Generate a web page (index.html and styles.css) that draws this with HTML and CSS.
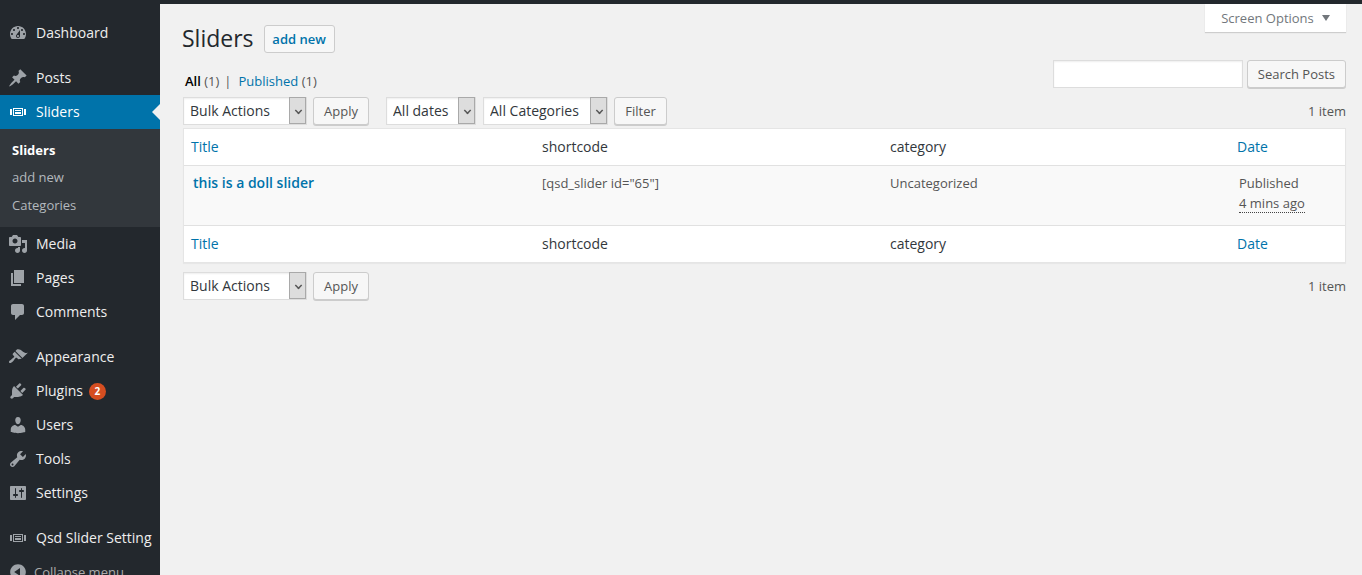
FILE: index.html
```html
<!DOCTYPE html>
<html lang="en">
<head>
<meta charset="utf-8">
<title>Sliders</title>
<link rel="stylesheet" href="styles.css">
</head>
<body>
<div class="topbar"></div>
<div class="layout">
  <nav class="sidebar">
    <ul class="menu">
      <li class="item sep"><svg class="ico" viewBox="0 0 20 20"><path d="M3.76 16h12.48c1.1-1.37 1.76-3.11 1.76-5 0-4.42-3.58-8-8-8s-8 3.58-8 8c0 1.89.66 3.63 1.76 5zM10 4c.55 0 1 .45 1 1s-.45 1-1 1-1-.45-1-1 .45-1 1-1zM6 6c.55 0 1 .45 1 1s-.45 1-1 1-1-.45-1-1 .45-1 1-1zm8 0c.55 0 1 .45 1 1s-.45 1-1 1-1-.45-1-1 .45-1 1-1zm-5.37 5.55L12 7v6c0 1.1-.9 2-2 2s-2-.9-2-2c0-.57.24-1.08.63-1.45zM4 10c.55 0 1 .45 1 1s-.45 1-1 1-1-.45-1-1 .45-1 1-1zm12 0c.55 0 1 .45 1 1s-.45 1-1 1-1-.45-1-1 .45-1 1-1zm-5 3c0-.55-.45-1-1-1s-1 .45-1 1 .45 1 1 1 1-.45 1-1z" fill-rule="evenodd"/></svg><span class="label">Dashboard</span></li>
      <li class="item"><svg class="ico" viewBox="0 0 20 20"><path d="M10.44 3.02l1.82-1.82 6.36 6.35-1.83 1.82c-1.05-.68-2.48-.57-3.41.36l-.75.75c-.92.93-1.04 2.35-.35 3.41l-1.83 1.82-2.41-2.41-2.8 2.79c-.42.42-3.38 2.71-3.8 2.29s1.86-3.39 2.28-3.81l2.79-2.79L4.1 9.36l1.83-1.82c1.05.69 2.48.57 3.4-.36l.75-.75c.93-.92 1.05-2.35.36-3.41z"/></svg><span class="label">Posts</span></li>
      <li class="item active"><svg class="ico" viewBox="0 0 20 20"><path d="M5 14V6h10v8H5zm-3-1V7h2v6H2zm4-6v6h8V7H6zm10 0h2v6h-2V7zm-3 2V8H7v1h6zm0 3v-2H7v2h6z" fill-rule="evenodd"/></svg><span class="label">Sliders</span></li>
      <li class="submenu">
        <a class="sub current">Sliders</a>
        <a class="sub">add new</a>
        <a class="sub">Categories</a>
      </li>
      <li class="item"><svg class="ico" viewBox="0 0 20 20"><path d="M13 11V4c0-.55-.45-1-1-1h-1.67L9 1H5L3.67 3H2c-.55 0-1 .45-1 1v7c0 .55.45 1 1 1h10c.55 0 1-.45 1-1zM7 4.5c1.38 0 2.5 1.12 2.5 2.5S8.38 9.5 7 9.5 4.5 8.38 4.5 7 5.62 4.5 7 4.5zM14 6h5v10.5c0 1.38-1.12 2.5-2.5 2.5S14 17.88 14 16.5s1.12-2.5 2.5-2.5c.17 0 .34.02.5.05V9h-3V6zm-4 8.05V13h2v3.5c0 1.38-1.12 2.5-2.5 2.5S7 17.88 7 16.5 8.12 14 9.5 14c.17 0 .34.02.5.05z" fill-rule="evenodd"/></svg><span class="label">Media</span></li>
      <li class="item"><svg class="ico" viewBox="0 0 20 20"><path d="M6 15V2h10v13H6zm-1 1h8v2H3V5h2v11z"/></svg><span class="label">Pages</span></li>
      <li class="item sep"><svg class="ico" viewBox="0 0 20 20"><path d="M5 2h9c1.1 0 2 .9 2 2v7c0 1.1-.9 2-2 2h-2l-5 5v-5H5c-1.1 0-2-.9-2-2V4c0-1.1.9-2 2-2z"/></svg><span class="label">Comments</span></li>
      <li class="item"><svg class="ico" viewBox="0 0 20 20"><path d="M14.48 11.06L7.41 3.99l1.5-1.5c.5-.56 2.3-.47 3.51.32 1.21.8 1.43 1.28 2.91 2.1 1.18.64 2.45 1.26 4.45.85zm-.71.71L6.7 4.7 4.93 6.47c-.39.39-.39 1.02 0 1.41l1.06 1.06c.39.39.39 1.03 0 1.42-.6.6-1.43 1.11-2.21 1.69-.35.26-.7.53-1.01.84C1.43 13.23.4 14.85 1.25 15.7c.85.85 2.47-.18 3.81-1.52.31-.31.58-.66.85-1.02.57-.78 1.08-1.61 1.69-2.21.39-.39 1.02-.39 1.41 0l1.06 1.06c.39.39 1.02.39 1.41 0z"/></svg><span class="label">Appearance</span></li>
      <li class="item"><svg class="ico" viewBox="0 0 20 20"><path d="M13.11 4.36L9.87 7.6 8 5.73l3.24-3.24c.35-.34 1.05-.2 1.56.32.52.51.66 1.21.31 1.55zm-8 1.77l.91-1.12 9.01 9.01-1.19.84c-.71.71-2.63 1.16-3.82 1.16H6.14L4.9 17.26c-.59.59-1.54.59-2.12 0-.59-.58-.59-1.53 0-2.12l1.24-1.24v-3.88c0-1.13.4-3.19 1.09-3.89zm7.26 3.97l3.24-3.24c.34-.35 1.04-.21 1.55.31.52.51.66 1.21.31 1.55l-3.24 3.25z"/></svg><span class="label">Plugins</span><b class="badge">2</b></li>
      <li class="item"><svg class="ico" viewBox="0 0 20 20"><path d="M10 9.25c-2.27 0-2.73-3.44-2.73-3.44C7 4.02 7.82 2 9.97 2c2.16 0 2.98 2.02 2.71 3.81 0 0-.41 3.44-2.68 3.44zm0 2.57L12.72 10c2.39 0 4.52 2.33 4.52 4.53v2.49s-3.65 1.13-7.24 1.13c-3.65 0-7.24-1.13-7.24-1.13v-2.49c0-2.25 1.94-4.48 4.47-4.48z"/></svg><span class="label">Users</span></li>
      <li class="item"><svg class="ico" viewBox="0 0 20 20"><path d="M16.68 9.77c-1.34 1.34-3.3 1.67-4.95.99l-5.41 6.52c-.99.99-2.59.99-3.58 0s-.99-2.59 0-3.57l6.52-5.42c-.68-1.65-.35-3.61.99-4.95 1.28-1.28 3.12-1.62 4.72-1.06l-2.89 2.89 2.82 2.82 2.86-2.87c.53 1.58.18 3.39-1.08 4.65zM3.81 16.21c.4.39 1.04.39 1.43 0 .4-.4.4-1.04 0-1.43-.39-.4-1.03-.4-1.43 0-.39.39-.39 1.03 0 1.43z" fill-rule="evenodd"/></svg><span class="label">Tools</span></li>
      <li class="item sep"><svg class="ico" viewBox="0 0 20 20"><path d="M18 16V4c0-.55-.45-1-1-1H3c-.55 0-1 .45-1 1v12c0 .55.45 1 1 1h14c.55 0 1-.45 1-1zM8 11h1c.55 0 1 .45 1 1s-.45 1-1 1H8v1.5c0 .28-.22.5-.5.5s-.5-.22-.5-.5V13H6c-.55 0-1-.45-1-1s.45-1 1-1h1V5.5c0-.28.22-.5.5-.5s.5.22.5.5V11zm5-2h-1c-.55 0-1-.45-1-1s.45-1 1-1h1V5.5c0-.28.22-.5.5-.5s.5.22.5.5V7h1c.55 0 1 .45 1 1s-.45 1-1 1h-1v5.5c0 .28-.22.5-.5.5s-.5-.22-.5-.5V9z" fill-rule="evenodd"/></svg><span class="label">Settings</span></li>
      <li class="item"><svg class="ico" viewBox="0 0 20 20"><path d="M5 14V6h10v8H5zm-3-1V7h2v6H2zm4-6v6h8V7H6zm10 0h2v6h-2V7zm-3 2V8H7v1h6zm0 3v-2H7v2h6z" fill-rule="evenodd"/></svg><span class="label">Qsd Slider Setting</span></li>
      <li class="item collapse"><svg class="ico" viewBox="0 0 20 20"><path d="M10 2.16c4.33 0 7.84 3.51 7.84 7.84s-3.51 7.84-7.84 7.84S2.16 14.33 2.16 10 5.71 2.16 10 2.16zm2 11.72V6.12L6.18 9.97z" fill-rule="evenodd"/></svg><span>Collapse menu</span></li>
    </ul>
  </nav>
  <main class="main">
    <button class="screen-options">Screen Options<i class="caret"></i></button>
    <div class="title-row">
      <h1 class="title">Sliders</h1>
      <a class="btn add-new">add new</a>
    </div>
    <div class="views-row">
      <div class="views"><b>All</b> <span class="count">(1)</span><span class="bar">|</span><a class="link">Published</a> <span class="count">(1)</span></div>
      <div class="search">
        <input class="search-input" type="text" aria-label="Search">
        <button class="btn">Search Posts</button>
      </div>
    </div>
    <div class="tablenav top">
      <div class="select-wrap w-bulk"><select class="select"><option>Bulk Actions</option></select><i class="arrow"></i></div>
      <button class="btn apply">Apply</button>
      <div class="select-wrap w-dates"><select class="select"><option>All dates</option></select><i class="arrow"></i></div>
      <div class="select-wrap w-cats"><select class="select"><option>All Categories</option></select><i class="arrow"></i></div>
      <button class="btn apply">Filter</button>
      <span class="num">1 item</span>
    </div>
    <table class="list">
      <thead>
        <tr><th class="c1"><a class="link">Title</a></th><th class="c2">shortcode</th><th class="c3">category</th><th class="c4"><a class="link">Date</a></th></tr>
      </thead>
      <tbody>
        <tr>
          <td class="name"><a class="link">this is a doll slider</a></td>
          <td>[qsd_slider id="65"]</td>
          <td>Uncategorized</td>
          <td>Published<br><abbr class="ago">4 mins ago</abbr></td>
        </tr>
      </tbody>
      <tfoot>
        <tr><th><a class="link">Title</a></th><th>shortcode</th><th>category</th><th><a class="link">Date</a></th></tr>
      </tfoot>
    </table>
    <div class="tablenav bottom">
      <div class="select-wrap w-bulk"><select class="select"><option>Bulk Actions</option></select><i class="arrow"></i></div>
      <button class="btn apply">Apply</button>
      <span class="num">1 item</span>
    </div>
  </main>
</div>
</body>
</html>
```

FILE: styles.css
```css
* { box-sizing: border-box; }
html, body { margin: 0; height: 100%; overflow: hidden; }
body {
  background: #f1f1f1;
  color: #444;
  font-family: "Open Sans", sans-serif;
  font-size: 13px;
}
.topbar { height: 4px; background: #23282d; }
.layout { display: flex; height: calc(100vh - 4px); }

.sidebar { width: 160px; flex: none; background: #23282d; overflow: hidden; }
.menu { list-style: none; margin: 12px 0 0; padding: 0; }
.item {
  position: relative;
  display: flex;
  align-items: center;
  height: 34px;
  padding-left: 8px;
  color: #eee;
  font-size: 14px;
  white-space: nowrap;
}
.label { padding-bottom: 2px; }
.item.sep { margin-bottom: 11px; }
.ico { width: 20px; height: 20px; flex: none; margin-right: 8px; fill: #9ea3a8; }
.item.active { background: #0073aa; color: #fff; }
.item.active .ico { fill: #fff; }
.item.active::after {
  content: "";
  position: absolute;
  right: 0;
  top: 50%;
  margin-top: -8px;
  border: 8px solid transparent;
  border-right-color: #f1f1f1;
  border-left-width: 0;
}
.submenu { background: #32373c; height: 98px; padding: 7px 0 0 12px; }
.sub { display: flex; align-items: center; height: 27.5px; color: #b4b9be; font-size: 13px; }
.sub.current { color: #fff; font-weight: 700; }
.badge {
  display: inline-block;
  width: 17px;
  height: 17px;
  margin-left: 6px;
  border-radius: 50%;
  background: #d54e21;
  color: #fff;
  font-size: 10px;
  font-weight: 700;
  line-height: 17px;
  text-align: center;
}
.collapse { color: #aaa; font-size: 13px; }
.collapse .ico { margin-right: 6px; }

.main { position: relative; flex: 1; min-width: 0; padding: 21px 16px 0 23px; }
.screen-options {
  position: absolute;
  top: 0;
  right: 16px;
  width: 141px;
  height: 28px;
  padding: 0;
  border: 0;
  background: #fff;
  box-shadow: 0 1px 1px rgba(0,0,0,.15);
  color: #72777c;
  font: 13px "Open Sans", sans-serif;
}
.caret {
  display: inline-block;
  margin-left: 8px;
  vertical-align: 2px;
  border-style: solid;
  border-width: 6px 4.5px 0;
  border-color: #72777c transparent transparent;
}
.title-row { display: flex; align-items: center; height: 28px; }
.title { margin: 0 0 2px -1px; color: #23282d; font-size: 23px; font-weight: 400; line-height: 28px; }
.btn {
  display: inline-flex;
  align-items: center;
  justify-content: center;
  height: 28px;
  padding: 0 10px;
  border: 1px solid #ccc;
  border-radius: 3px;
  background: #f7f7f7;
  box-shadow: 0 1px 0 #ccc;
  color: #555;
  font: 13px "Open Sans", sans-serif;
}
.add-new {
  margin-left: 10px;
  width: 71px;
  padding: 0;
  box-shadow: none;
  background: #f7f7f7;
  color: #0073aa;
  font-weight: 600;
}
.views-row { display: flex; justify-content: space-between; align-items: flex-end; margin-top: 7px; height: 28px; }
.views { margin-left: 2px; line-height: 14px; color: #555; }
.views b { color: #000; font-weight: 600; }
.bar { margin: 0 7px 0 5px; color: #555; }
.link { color: #0073aa; }
.count { color: #555; }
.search { display: flex; gap: 4px; }
.search-input { width: 190px; height: 28px; border: 1px solid #ddd; background: #fff; box-shadow: inset 0 1px 2px rgba(0,0,0,.07); }
.tablenav { display: flex; align-items: center; height: 28px; margin-top: 9px; }
.select-wrap { position: relative; height: 28px; }
.select {
  display: block;
  width: 100%;
  height: 28px;
  padding: 0 20px 2px 6px;
  border: 1px solid #ddd;
  background: #fff;
  color: #32373c;
  font: 14px "Open Sans", sans-serif;
  appearance: none;
  box-shadow: inset 0 1px 2px rgba(0,0,0,.07);
}
.arrow {
  position: absolute;
  top: 0;
  right: 1px;
  width: 17px;
  height: 27px;
  border: 1px solid #a9a9a9;
  background: #ddd;
  pointer-events: none;
}
.arrow::after {
  content: "";
  position: absolute;
  left: 5px;
  top: 9px;
  width: 5px;
  height: 5px;
  border: solid #555;
  border-width: 0 2px 2px 0;
  transform: rotate(45deg) scale(.75);
}
.w-bulk { width: 124px; }
.w-dates { width: 90px; margin-right: 7px; }
.w-cats { width: 125px; margin-right: 6px; }
.apply { margin-left: 6px; }
.top .apply:nth-of-type(1) { margin-right: 17px; }
.top .apply { width: 56px; padding: 0; }
.top .select-wrap ~ .select-wrap ~ .apply { width: 53px; margin: 0; }
.bottom .apply { width: 56px; padding: 0; }
.num { margin-left: auto; color: #555; }
.list {
  width: 1163px;
  margin-top: 3px;
  border: 1px solid #e5e5e5;
  border-spacing: 0;
  border-collapse: separate;
  background: #fff;
  table-layout: fixed;
  box-shadow: 0 1px 1px rgba(0,0,0,.04);
}
.c1 { width: 351px; }
.c2 { width: 348px; }
.c3 { width: 347px; }
.list th { height: 37px; padding: 0 7px 2px; font-size: 14px; font-weight: 400; text-align: left; color: #32373c; }
.list thead th { border-bottom: 1px solid #e1e1e1; }
.list tfoot th { border-top: 1px solid #e1e1e1; }
.list td { height: 59px; padding: 7px 7px 0; vertical-align: top; background: #f9f9f9; color: #555; font-size: 13px; line-height: 20px; }
.list td:last-child { padding-left: 9px; }
.list .name { padding-left: 9px; font-size: 14px; font-weight: 600; }
.ago { border-bottom: 1px dotted #444; text-decoration: none; }
```
